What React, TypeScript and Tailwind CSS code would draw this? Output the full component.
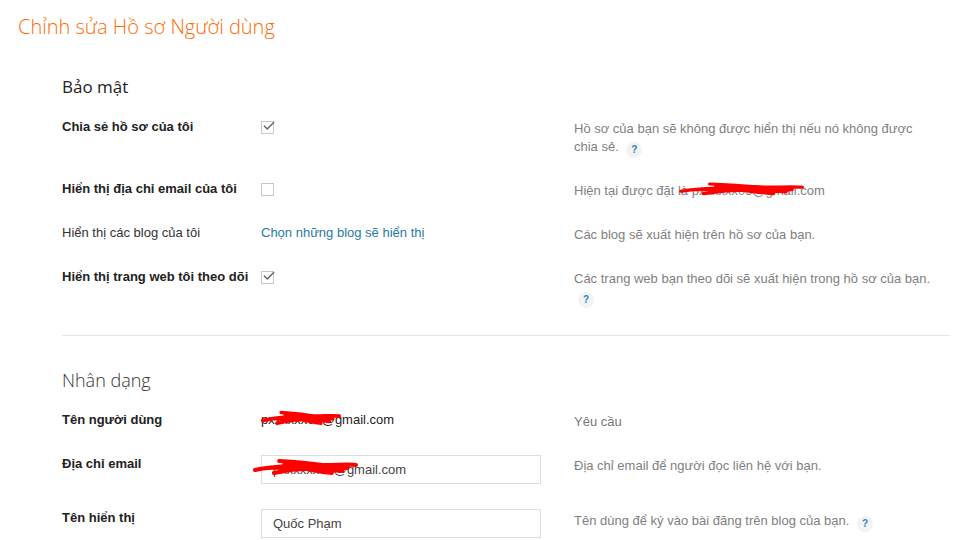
import { Check } from 'lucide-react';

function Help() {
  return (
    <span className="ml-1 inline-flex h-[16px] w-[16px] items-center justify-center rounded-full bg-[#f3f3f3] align-[-2px] text-[10px] font-bold leading-none text-[#2a86b4]">
      ?
    </span>
  );
}

function Box({ checked }: { checked?: boolean }) {
  return (
    <div className="relative mt-[3px] h-[13px] w-[13px] border border-[#c8c8c8] bg-white">
      {checked && (
        <Check
          className="absolute -top-[3px] left-[0px] h-[14px] w-[14px] text-[#666]"
          strokeWidth={2.5}
        />
      )}
    </div>
  );
}

// red marker strokes hiding the address
function Scribble({ className }: { className: string }) {
  return (
    <svg className={`pointer-events-none absolute ${className}`} viewBox="0 0 100 20" preserveAspectRatio="none">
      <path
        d="M2 14 C20 10 40 9 70 9 C80 9 92 8 98 9 M25 5 C45 6 60 8 80 11 M20 17 C40 12 60 11 85 15 M30 8 C50 13 65 16 75 17 M15 12 C35 11 55 12 90 12"
        fill="none"
        stroke="#ff0000"
        strokeWidth="4"
        strokeLinecap="round"
      />
    </svg>
  );
}

function Row({
  label,
  bold = true,
  control,
  desc,
  h,
}: {
  label: string;
  bold?: boolean;
  control: React.ReactNode;
  desc: React.ReactNode;
  h: string;
}) {
  return (
    <div className={`grid grid-cols-[199px_313px_360px] ${h}`}>
      <div className={bold ? 'font-bold text-[#222]' : 'text-[#333]'}>{label}</div>
      <div>{control}</div>
      <div className="pt-[2px] text-[#808080]">{desc}</div>
    </div>
  );
}

export default function App() {
  return (
    <div className="h-[540px] w-[958px] overflow-hidden bg-white font-['Liberation_Sans',Arial,sans-serif] text-[13px] leading-[18px]">
      <h1 className="pl-[18px] pt-[13px] font-['Open_Sans',sans-serif] text-[20px] font-light leading-[28px] text-[#ff6a00]">
        Chỉnh sửa Hồ sơ Người dùng
      </h1>

      <div className="pl-[62px]">
        <h2 className="mt-[34px] mb-[19px] font-['Open_Sans',sans-serif] text-[17px] leading-[24px] text-[#222]">
          Bảo mật
        </h2>

        <Row
          label="Chia sẻ hồ sơ của tôi"
          h="h-[62px]"
          control={<Box checked />}
          desc={
            <>
              Hồ sơ của bạn sẽ không được hiển thị nếu nó không được chia sẻ. <Help />
            </>
          }
        />
        <Row
          label="Hiển thị địa chỉ email của tôi"
          h="h-[44px]"
          control={<Box />}
          desc={
            <span className="relative">
              Hiện tại được đặt là pxxxxxx05@gmail.com
              <Scribble className="left-[105px] -top-[3px] h-[16px] w-[125px]" />
            </span>
          }
        />
        <Row
          label="Hiển thị các blog của tôi"
          bold={false}
          h="h-[44px]"
          control={<span className="text-[#1f7ba3]">Chọn những blog sẽ hiển thị</span>}
          desc="Các blog sẽ xuất hiện trên hồ sơ của bạn."
        />
        <Row
          label="Hiển thị trang web tôi theo dõi"
          h="h-[67px]"
          control={<Box checked />}
          desc={
            <>
              Các trang web bạn theo dõi sẽ xuất hiện trong hồ sơ của bạn. <Help />
            </>
          }
        />

        <div className="mr-[8px] border-t border-[#e5e5e5]" />

        <h2 className="mt-[32px] mb-[19px] font-['Open_Sans',sans-serif] text-[18px] font-light leading-[24px] text-[#333]">
          Nhân dạng
        </h2>

        <Row
          label="Tên người dùng"
          h="h-[44px]"
          control={
            <span className="relative text-[#222]">
              pxxxxxx05@gmail.com
              <Scribble className="left-[0px] -top-[4px] h-[18px] w-[80px]" />
            </span>
          }
          desc={<span className="text-[#777]">Yêu cầu</span>}
        />
        <div className="grid h-[54px] grid-cols-[199px_313px_360px]">
          <div className="font-bold text-[#222]">Địa chỉ email</div>
          <div className="relative">
            <div className="flex h-[29px] w-[280px] items-center border border-[#ddd] px-[11px] text-[#444]">
              pxxxxxx05@gmail.com
            </div>
            <Scribble className="-left-[8px] top-[1px] h-[20px] w-[105px]" />
          </div>
          <div className="pt-[2px] text-[#808080]">Địa chỉ email để người đọc liên hệ với bạn.</div>
        </div>
        <div className="grid h-[44px] grid-cols-[199px_313px_360px]">
          <div className="font-bold text-[#222]">Tên hiển thị</div>
          <div>
            <div className="flex h-[29px] w-[280px] items-center border border-[#ddd] px-[11px] text-[#444]">
              Quốc Phạm
            </div>
          </div>
          <div className="pt-[3px] text-[#808080]">
            Tên dùng để ký vào bài đăng trên blog của bạn. <Help />
          </div>
        </div>
      </div>
    </div>
  );
}
